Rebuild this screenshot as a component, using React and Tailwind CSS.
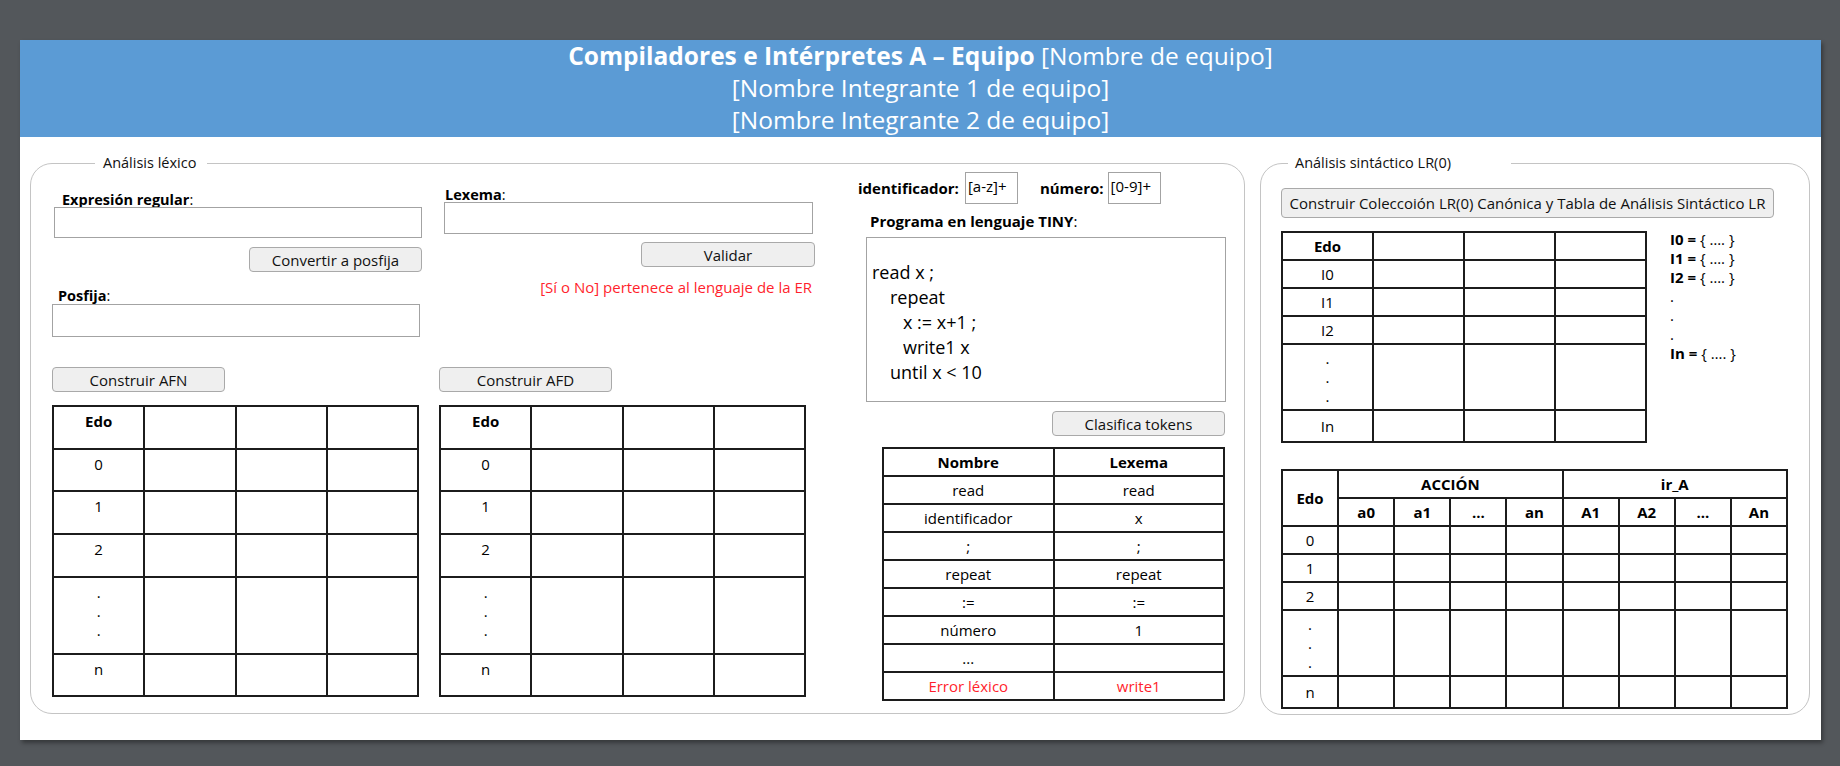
const cell = "border-2 border-[#1c1c1c] p-0";

function Dots({ className = "" }) {
  return (
    <div className={"flex flex-col items-center leading-[19px] " + className}>
      <span>.</span>
      <span>.</span>
      <span>.</span>
    </div>
  );
}

function StateTable() {
  const rows = [
    { t: "Edo", h: 43, b: true },
    { t: "0", h: 42 },
    { t: "1", h: 43 },
    { t: "2", h: 43 },
    { t: "dots", h: 77 },
    { t: "n", h: 42 },
  ];
  return (
    <table className="w-[367px] border-collapse table-fixed text-[15px] leading-[20px]">
      <tbody>
        {rows.map((r, i) => (
          <tr key={i} style={{ height: r.h }}>
            <td className={cell + " align-top text-center pt-[4px] " + (r.b ? "font-bold" : "")}>
              {r.t === "dots" ? <Dots className="pt-[1px]" /> : r.t}
            </td>
            <td className={cell}></td>
            <td className={cell}></td>
            <td className={cell}></td>
          </tr>
        ))}
      </tbody>
    </table>
  );
}

function TokenTable() {
  const rows = [
    ["read", "read"],
    ["identificador", "x"],
    [";", ";"],
    ["repeat", "repeat"],
    [":=", ":="],
    ["número", "1"],
    ["...", ""],
  ];
  return (
    <table className="w-[343px] border-collapse table-fixed text-[15px] leading-[20px]">
      <tbody>
        <tr className="h-[28px]">
          <td className={cell + " text-center font-bold"}>Nombre</td>
          <td className={cell + " text-center font-bold"}>Lexema</td>
        </tr>
        {rows.map((r, i) => (
          <tr key={i} className="h-[28px]">
            <td className={cell + " text-center"}>{r[0]}</td>
            <td className={cell + " text-center"}>{r[1]}</td>
          </tr>
        ))}
        <tr className="h-[28px]">
          <td className={cell + " text-center text-[#ff1f2d]"}>Error léxico</td>
          <td className={cell + " text-center text-[#ff1f2d]"}>write1</td>
        </tr>
      </tbody>
    </table>
  );
}

function LRTable() {
  const rows = [
    { t: "Edo", h: 28, b: true },
    { t: "I0", h: 28 },
    { t: "I1", h: 28 },
    { t: "I2", h: 28 },
    { t: "dots", h: 66 },
    { t: "In", h: 32 },
  ];
  return (
    <table className="w-[366px] border-collapse table-fixed text-[15px] leading-[20px]">
      <tbody>
        {rows.map((r, i) => (
          <tr key={i} style={{ height: r.h }}>
            <td className={cell + " text-center align-middle " + (r.b ? "font-bold" : "")}>
              {r.t === "dots" ? <Dots /> : r.t}
            </td>
            <td className={cell}></td>
            <td className={cell}></td>
            <td className={cell}></td>
          </tr>
        ))}
      </tbody>
    </table>
  );
}

function ActionTable() {
  const subs = ["a0", "a1", "...", "an", "A1", "A2", "...", "An"];
  const body = [
    { t: "0", h: 28 },
    { t: "1", h: 28 },
    { t: "2", h: 28 },
    { t: "dots", h: 66 },
    { t: "n", h: 32 },
  ];
  return (
    <table className="w-[507px] border-collapse table-fixed text-[15px] leading-[20px]">
      <tbody>
        <tr className="h-[28px]">
          <td rowSpan={2} className={cell + " text-center font-bold"}>Edo</td>
          <td colSpan={4} className={cell + " text-center font-bold"}>ACCIÓN</td>
          <td colSpan={4} className={cell + " text-center font-bold"}>ir_A</td>
        </tr>
        <tr className="h-[28px]">
          {subs.map((s, i) => (
            <td key={i} className={cell + " text-center font-bold"}>{s}</td>
          ))}
        </tr>
        {body.map((r, i) => (
          <tr key={i} style={{ height: r.h }}>
            <td className={cell + " text-center align-middle"}>
              {r.t === "dots" ? <Dots /> : r.t}
            </td>
            {subs.map((s, j) => (
              <td key={j} className={cell}></td>
            ))}
          </tr>
        ))}
      </tbody>
    </table>
  );
}

const btn =
  "block h-[25px] rounded-[4px] border border-[#a9a9a9] bg-[#efefef] text-[15px] leading-[20px] text-[#111]";
const input = "block border border-[#a3a3a3] bg-white";

export default function App() {
  return (
    <div className="min-h-screen w-full bg-[#53575b] pt-[40px] pl-[20px] font-['Open_Sans',sans-serif] text-black">
      <div className="w-[1801px] h-[700px] bg-white shadow-[2px_3px_4px_rgba(0,0,0,0.35)] flex flex-col">
        <header className="h-[97px] bg-[#5b9bd5] text-white flex flex-col items-center text-[24.5px] leading-[32px]">
          <div>
            <span className="font-bold">Compiladores e Intérpretes A – Equipo</span> [Nombre de equipo]
          </div>
          <div>[Nombre Integrante 1 de equipo]</div>
          <div>[Nombre Integrante 2 de equipo]</div>
        </header>

        <div className="flex items-start pl-[10px] pt-[16px] gap-[15px]">
          {/* Análisis léxico */}
          <fieldset className="w-[1215px] h-[561px] border border-[#c4c4c4] rounded-[22px]">
            <legend className="ml-[64px] pl-[8px] pr-[11px] text-[14.5px] leading-[20px] text-[#111]">
              Análisis léxico
            </legend>
            <div className="flex items-start">
              {/* Column 1 */}
              <div className="ml-[21px] w-[370px] flex flex-col">
                <div className="mt-[19px] ml-[10px] h-[15px] text-[14.5px] leading-[15px]">
                  <span className="font-bold">Expresión regular</span>:
                </div>
                <input className={input + " ml-[2px] w-[368px] h-[31px]"} readOnly />
                <button className={btn + " mt-[9px] self-end w-[173px]"}>Convertir a posfija</button>
                <div className="mt-[16px] ml-[6px] h-[16px] text-[14.5px] leading-[16px]">
                  <span className="font-bold">Posfija</span>:
                </div>
                <input className={input + " w-[368px] h-[33px]"} readOnly />
                <button className={btn + " mt-[30px] w-[173px]"}>Construir AFN</button>
                <div className="mt-[13px]">
                  <StateTable />
                </div>
              </div>

              {/* Column 2 */}
              <div className="ml-[17px] w-[376px] flex flex-col">
                <div className="mt-[14px] ml-[6px] h-[15px] text-[14.5px] leading-[15px]">
                  <span className="font-bold">Lexema</span>:
                </div>
                <input className={input + " ml-[5px] w-[369px] h-[32px]"} readOnly />
                <button className={btn + " mt-[8px] self-end w-[174px]"}>Validar</button>
                <div className="mt-[10px] h-[20px] pr-[3px] text-right text-[15px] leading-[20px] text-[#ff1f2d]">
                  [Sí o No] pertenece al lenguaje de la ER
                </div>
                <button className={btn + " mt-[70px] w-[173px]"}>Construir AFD</button>
                <div className="mt-[13px]">
                  <StateTable />
                </div>
              </div>

              {/* Column 3 */}
              <div className="ml-[43px] w-[368px] flex flex-col">
                <div className="-mt-[1px] h-[32px] flex items-center text-[15px]">
                  <span className="font-bold">identificador:</span>
                  <div className="ml-[6px] w-[53px] h-[32px] border border-[#a3a3a3] pl-[2px] pt-[4px] text-[15px] leading-[18px]">
                    [a-z]+
                  </div>
                  <span className="ml-[22px] font-bold">número:</span>
                  <div className="ml-[4px] w-[53px] h-[32px] border border-[#a3a3a3] pl-[2px] pt-[4px] text-[15px] leading-[18px]">
                    [0-9]+
                  </div>
                </div>
                <div className="mt-[8px] ml-[12px] h-[18px] text-[15px] leading-[18px]">
                  <span className="font-bold">Programa en lenguaje TINY</span>:
                </div>
                <div className="mt-[7px] ml-[8px] w-[360px] h-[165px] border border-[#a3a3a3] pt-[22px] pl-[5px] text-[18px] leading-[25px]">
                  <div>read x ;</div>
                  <div className="pl-[18px]">repeat</div>
                  <div className="pl-[31px]">x := x+1 ;</div>
                  <div className="pl-[31px]">write1 x</div>
                  <div className="pl-[18px]">until x &lt; 10</div>
                </div>
                <button className={btn + " mt-[9px] self-end mr-[1px] w-[173px]"}>Clasifica tokens</button>
                <div className="mt-[11px] ml-[24px]">
                  <TokenTable />
                </div>
              </div>
            </div>
          </fieldset>

          {/* Análisis sintáctico */}
          <fieldset className="w-[550px] h-[562px] border border-[#c4c4c4] rounded-[22px]">
            <legend className="ml-[27px] pl-[7px] pr-[60px] text-[14.5px] leading-[20px] text-[#111]">
              Análisis sintáctico LR(0)
            </legend>
            <div className="flex flex-col pl-[20px]">
              <button className={btn + " mt-[15px] w-[493px] h-[30px]"}>
                Construir Coleccoión LR(0) Canónica y Tabla de Análisis Sintáctico LR
              </button>
              <div className="mt-[13px] flex items-start">
                <LRTable />
                <div className="ml-[23px] -mt-[1px] text-[15px] leading-[19px]">
                  <div><span className="font-bold">I0 =</span> {"{ …. }"}</div>
                  <div><span className="font-bold">I1 =</span> {"{ …. }"}</div>
                  <div><span className="font-bold">I2 =</span> {"{ …. }"}</div>
                  <div>.</div>
                  <div>.</div>
                  <div>.</div>
                  <div><span className="font-bold">In =</span> {"{ …. }"}</div>
                </div>
              </div>
              <div className="mt-[26px]">
                <ActionTable />
              </div>
            </div>
          </fieldset>
        </div>
      </div>
    </div>
  );
}
